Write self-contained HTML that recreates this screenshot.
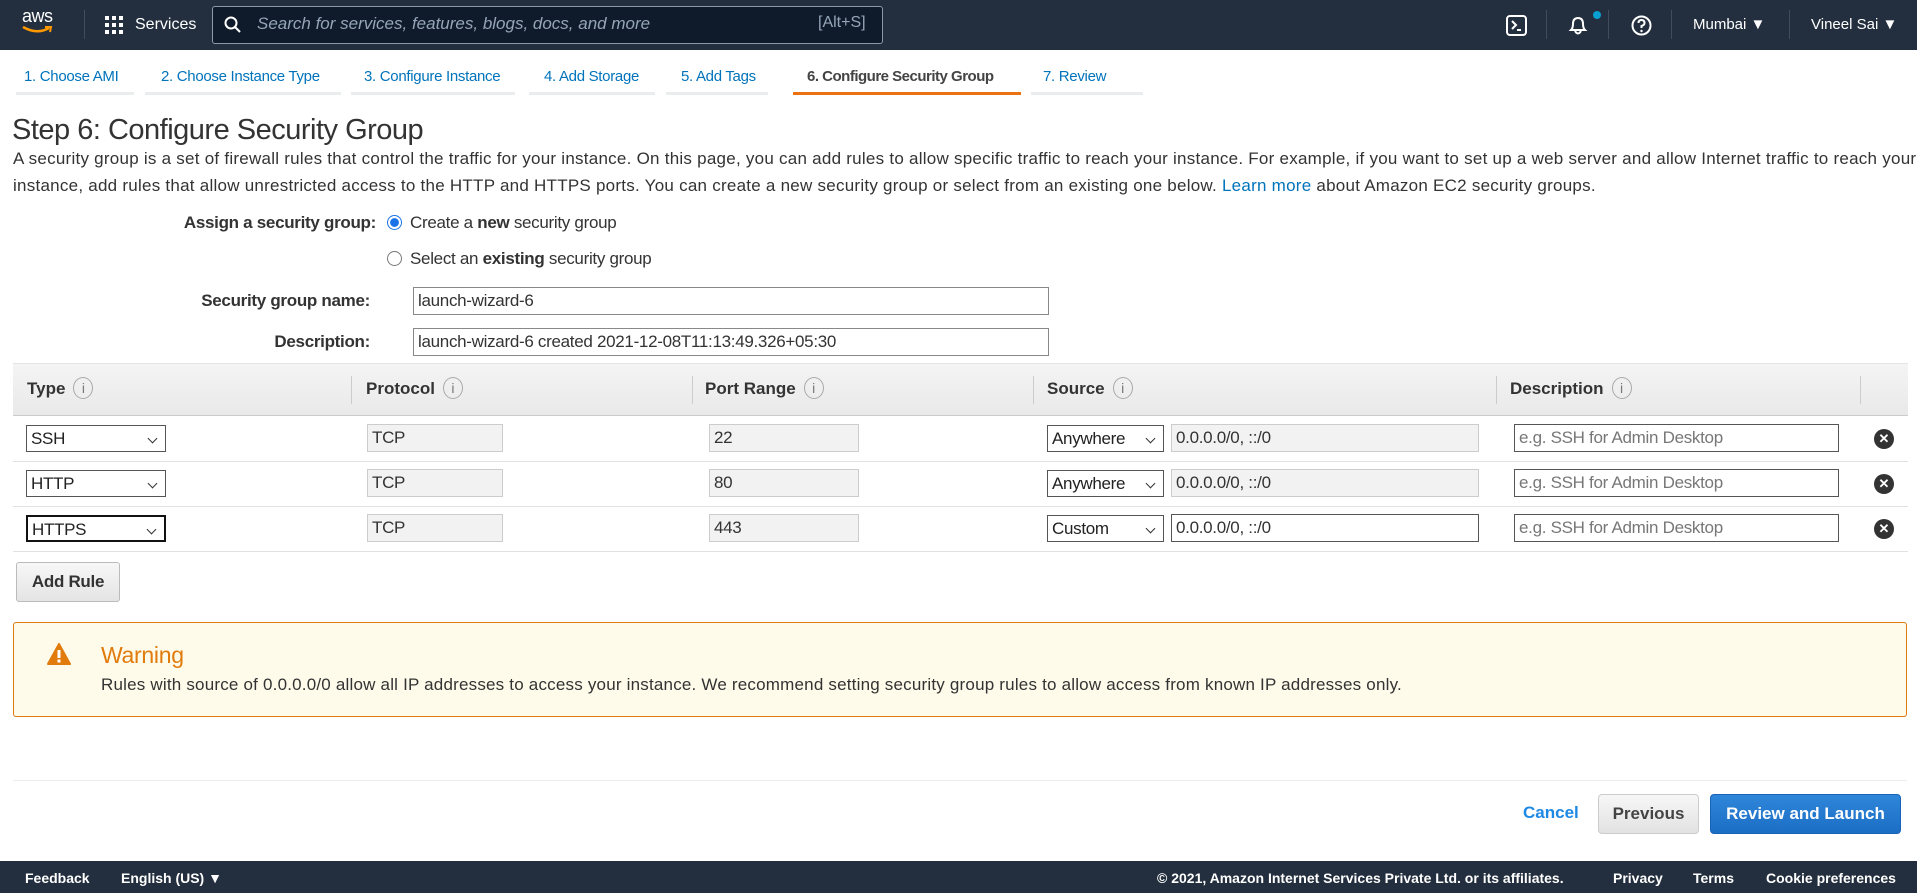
<!DOCTYPE html>
<html><head><meta charset="utf-8"><style>
*{box-sizing:border-box;margin:0;padding:0}
body{width:1917px;height:893px;position:relative;overflow:hidden;background:#fff;font-family:"Liberation Sans",Arial,sans-serif;color:#333}
.a{position:absolute;white-space:nowrap}
.nav{left:0;top:0;width:1917px;height:50px;background:#232f3e}
.navt{color:#fff;font-size:15px}
.tl{top:68px;font-size:15px;color:#0073bb;letter-spacing:-0.3px}
.ul{top:92px;height:3px;background:#eaeded}
.in{position:absolute;border:1px solid #aaa;background:#fff;font-size:17px;padding-left:4px;line-height:26px;height:28px;color:#333;white-space:nowrap;letter-spacing:-0.3px}
.ro{background:#f2f2f2;border-color:#ccc}
.ph{color:#777}
.sel{position:absolute;border:1px solid #555;background:#fff;font-size:17px;padding-left:4px;line-height:25px;height:27px;color:#222;letter-spacing:-0.3px}
.sel:after{content:"";position:absolute;right:9px;top:9px;width:6px;height:6px;border-right:1.5px solid #333;border-bottom:1.5px solid #333;transform:rotate(45deg)}
.th{font-weight:bold;font-size:17px;top:379px;color:#333}
.i{display:inline-block;width:20px;height:22px;border:1px solid #aaa;border-radius:50%;font-size:14px;text-align:center;line-height:20px;color:#777;font-weight:normal;vertical-align:middle;margin-left:8px;margin-top:-3px}
.x{position:absolute;width:20px;height:20px;border-radius:50%;background:#333;color:#fff;font-size:13px;text-align:center;line-height:20px;font-weight:bold}
.ft{color:#fff;font-size:14px;top:870px}
.rl{left:13px;width:1895px;height:1px;background:#e1e1e1}
.lbl{font-weight:bold;font-size:17px;text-align:right;letter-spacing:-0.3px}
.txt{font-size:17px;letter-spacing:-0.3px}
</style></head><body>
<div class="a nav"></div>
<div class="a navt" style="left:22px;top:6px;font-size:18px;letter-spacing:-0.5px">aws</div>
<svg class="a" style="left:21px;top:25px" width="32" height="10"><path d="M2 2 Q16 10 28 3" stroke="#f90" stroke-width="2.5" fill="none"/><path d="M24 2 L30 2 L29 7" stroke="#f90" stroke-width="2" fill="none"/></svg>
<div class="a" style="left:84px;top:10px;width:1px;height:29px;background:#414d5c"></div>
<svg class="a" style="left:105px;top:16px" width="18" height="18" fill="#fff"><rect x="0" y="0" width="4" height="4"/><rect x="7" y="0" width="4" height="4"/><rect x="14" y="0" width="4" height="4"/><rect x="0" y="7" width="4" height="4"/><rect x="7" y="7" width="4" height="4"/><rect x="14" y="7" width="4" height="4"/><rect x="0" y="14" width="4" height="4"/><rect x="7" y="14" width="4" height="4"/><rect x="14" y="14" width="4" height="4"/></svg>
<div class="a navt" style="left:135px;top:16px;font-size:16px">Services</div>
<div class="a" style="left:212px;top:6px;width:671px;height:38px;border:1px solid #8d99a8;border-radius:3px;background:#0f1b2a"></div>
<svg class="a" style="left:224px;top:16px" width="18" height="18"><circle cx="7" cy="7" r="5.5" stroke="#fff" stroke-width="2" fill="none"/><path d="M11 11 L16 16" stroke="#fff" stroke-width="2"/></svg>
<div class="a" style="left:257px;top:14px;font-size:17px;font-style:italic;color:#95a5b8">Search for services, features, blogs, docs, and more</div>
<div class="a" style="left:818px;top:14px;font-size:16px;color:#95a5b8">[Alt+S]</div>
<svg class="a" style="left:1506px;top:15px" width="21" height="21"><rect x="1" y="1" width="19" height="19" rx="3" stroke="#fff" stroke-width="2" fill="none"/><path d="M6 6 L10 10 L6 14" stroke="#fff" stroke-width="2" fill="none"/><path d="M11 15 H15" stroke="#fff" stroke-width="2"/></svg>
<div class="a" style="left:1546px;top:10px;width:1px;height:29px;background:#414d5c"></div>
<svg class="a" style="left:1567px;top:14px" width="22" height="22"><path d="M4 16 Q6 14 6 10 Q6 4 11 4 Q16 4 16 10 Q16 14 18 16 Z" stroke="#fff" stroke-width="2" fill="none"/><path d="M8 17 Q11 22 14 17" stroke="#fff" stroke-width="2" fill="none"/></svg>
<div class="a" style="left:1593px;top:11px;width:8px;height:8px;border-radius:50%;background:#0a9fd3"></div>
<div class="a" style="left:1608px;top:10px;width:1px;height:29px;background:#414d5c"></div>
<svg class="a" style="left:1631px;top:15px" width="21" height="21"><circle cx="10.5" cy="10.5" r="9" stroke="#fff" stroke-width="2" fill="none"/><path d="M7.5 8 Q7.5 5 10.5 5 Q13.5 5 13.5 8 Q13.5 10 10.5 11 V13" stroke="#fff" stroke-width="2" fill="none"/><circle cx="10.5" cy="16" r="1.2" fill="#fff"/></svg>
<div class="a" style="left:1671px;top:10px;width:1px;height:29px;background:#414d5c"></div>
<div class="a navt" style="left:1693px;top:16px">Mumbai ▼</div>
<div class="a" style="left:1789px;top:10px;width:1px;height:29px;background:#414d5c"></div>
<div class="a navt" style="left:1811px;top:16px">Vineel Sai ▼</div>

<div class="a tl" style="left:24px">1. Choose AMI</div>
<div class="a tl" style="left:161px">2. Choose Instance Type</div>
<div class="a tl" style="left:364px">3. Configure Instance</div>
<div class="a tl" style="left:544px">4. Add Storage</div>
<div class="a tl" style="left:681px">5. Add Tags</div>
<div class="a tl" style="left:807px;color:#444;font-weight:bold;letter-spacing:-0.5px">6. Configure Security Group</div>
<div class="a tl" style="left:1043px">7. Review</div>
<div class="a ul" style="left:16px;width:118px"></div>
<div class="a ul" style="left:145px;width:196px"></div>
<div class="a ul" style="left:351px;width:164px"></div>
<div class="a ul" style="left:529px;width:126px"></div>
<div class="a ul" style="left:666px;width:102px"></div>
<div class="a ul" style="left:793px;width:228px;background:#ec7211"></div>
<div class="a ul" style="left:1031px;width:112px"></div>

<div class="a" style="left:12px;top:114px;font-size:29px;color:#333;letter-spacing:-0.5px">Step 6: Configure Security Group</div>
<div class="a txt" style="left:13px;top:149px;letter-spacing:0.25px">A security group is a set of firewall rules that control the traffic for your instance. On this page, you can add rules to allow specific traffic to reach your instance. For example, if you want to set up a web server and allow Internet traffic to reach your</div>
<div class="a txt" style="left:13px;top:176px;letter-spacing:0.25px">instance, add rules that allow unrestricted access to the HTTP and HTTPS ports. You can create a new security group or select from an existing one below. <span style="color:#0073bb">Learn more</span> about Amazon EC2 security groups.</div>

<div class="a lbl" style="left:100px;width:276px;top:213px">Assign a security group:</div>
<div class="a" style="left:387px;top:215px;width:15px;height:15px;border-radius:50%;border:1px solid #1a73e8;background:radial-gradient(#1a73e8 45%,#fff 50%)"></div>
<div class="a txt" style="left:410px;top:213px">Create a <b>new</b> security group</div>
<div class="a" style="left:387px;top:251px;width:15px;height:15px;border-radius:50%;border:1px solid #777"></div>
<div class="a txt" style="left:410px;top:249px">Select an <b>existing</b> security group</div>

<div class="a lbl" style="left:100px;width:270px;top:291px">Security group name:</div>
<div class="in" style="left:413px;top:287px;width:636px;border-color:#888">launch-wizard-6</div>
<div class="a lbl" style="left:100px;width:270px;top:332px">Description:</div>
<div class="in" style="left:413px;top:328px;width:636px;border-color:#888">launch-wizard-6 created 2021-12-08T11:13:49.326+05:30</div>

<div class="a" style="left:13px;top:363px;width:1895px;height:53px;background:linear-gradient(#f4f4f4,#e9e9e9);border-top:1px solid #e4e4e4;border-bottom:1px solid #ccc"></div>
<div class="a" style="left:351px;top:376px;width:1px;height:28px;background:#ccc"></div>
<div class="a" style="left:692px;top:376px;width:1px;height:28px;background:#ccc"></div>
<div class="a" style="left:1033px;top:376px;width:1px;height:28px;background:#ccc"></div>
<div class="a" style="left:1496px;top:376px;width:1px;height:28px;background:#ccc"></div>
<div class="a" style="left:1860px;top:376px;width:1px;height:28px;background:#ccc"></div>
<div class="a th" style="left:27px">Type<span class="i">i</span></div>
<div class="a th" style="left:366px">Protocol<span class="i">i</span></div>
<div class="a th" style="left:705px">Port Range<span class="i">i</span></div>
<div class="a th" style="left:1047px">Source<span class="i">i</span></div>
<div class="a th" style="left:1510px">Description<span class="i">i</span></div>

<div class="a rl" style="top:461px"></div>
<div class="a rl" style="top:506px"></div>
<div class="a rl" style="top:551px"></div>

<div class="sel" style="left:26px;top:425px;width:140px">SSH</div>
<div class="in ro" style="left:367px;top:424px;width:136px">TCP</div>
<div class="in ro" style="left:709px;top:424px;width:150px">22</div>
<div class="sel" style="left:1047px;top:425px;width:117px">Anywhere</div>
<div class="in ro" style="left:1171px;top:424px;width:308px">0.0.0.0/0, ::/0</div>
<div class="in ph" style="left:1514px;top:424px;width:325px;border-color:#555">e.g. SSH for Admin Desktop</div>
<div class="x" style="left:1874px;top:429px">✕</div>

<div class="sel" style="left:26px;top:470px;width:140px">HTTP</div>
<div class="in ro" style="left:367px;top:469px;width:136px">TCP</div>
<div class="in ro" style="left:709px;top:469px;width:150px">80</div>
<div class="sel" style="left:1047px;top:470px;width:117px">Anywhere</div>
<div class="in ro" style="left:1171px;top:469px;width:308px">0.0.0.0/0, ::/0</div>
<div class="in ph" style="left:1514px;top:469px;width:325px;border-color:#555">e.g. SSH for Admin Desktop</div>
<div class="x" style="left:1874px;top:474px">✕</div>

<div class="sel" style="left:26px;top:515px;width:140px;border:2px solid #111">HTTPS</div>
<div class="in ro" style="left:367px;top:514px;width:136px">TCP</div>
<div class="in ro" style="left:709px;top:514px;width:150px">443</div>
<div class="sel" style="left:1047px;top:515px;width:117px">Custom</div>
<div class="in" style="left:1171px;top:514px;width:308px;border-color:#555">0.0.0.0/0, ::/0</div>
<div class="in ph" style="left:1514px;top:514px;width:325px;border-color:#555">e.g. SSH for Admin Desktop</div>
<div class="x" style="left:1874px;top:519px">✕</div>

<div class="a" style="left:16px;top:562px;width:104px;height:40px;border:1px solid #bbb;border-radius:3px;background:linear-gradient(#f7f7f7,#e4e4e4);font-weight:bold;font-size:17px;text-align:center;line-height:38px;letter-spacing:-0.3px">Add Rule</div>

<div class="a" style="left:13px;top:622px;width:1894px;height:95px;border:1px solid #e07b0c;border-radius:3px;background:#fefbea"></div>
<svg class="a" style="left:47px;top:643px" width="24" height="22"><path d="M12 1 L23 21 H1 Z" fill="#e07b0c" stroke="#e07b0c" stroke-linejoin="round" stroke-width="2"/><rect x="10.5" y="7" width="3" height="8" fill="#fff"/><rect x="10.5" y="16.5" width="3" height="3" fill="#fff"/></svg>
<div class="a" style="left:101px;top:642px;font-size:23px;color:#e07b0c;letter-spacing:-0.3px">Warning</div>
<div class="a txt" style="left:101px;top:675px;letter-spacing:0.2px">Rules with source of 0.0.0.0/0 allow all IP addresses to access your instance. We recommend setting security group rules to allow access from known IP addresses only.</div>

<div class="a" style="left:13px;top:780px;width:1894px;height:1px;background:#eaeded"></div>
<div class="a" style="left:1523px;top:803px;font-size:17px;font-weight:bold;color:#1e88e5">Cancel</div>
<div class="a" style="left:1598px;top:794px;width:101px;height:40px;border:1px solid #ccc;border-radius:4px;background:linear-gradient(#f7f7f7,#e2e2e2);font-weight:bold;font-size:17px;text-align:center;line-height:38px;color:#444">Previous</div>
<div class="a" style="left:1710px;top:794px;width:191px;height:40px;border:1px solid #1a62b8;border-radius:4px;background:linear-gradient(#2f86d9,#1b6ec4);font-weight:bold;font-size:17px;text-align:center;line-height:38px;color:#fff">Review and Launch</div>

<div class="a" style="left:0;top:861px;width:1917px;height:32px;background:#232f3e"></div>
<div class="a ft" style="left:25px;font-weight:bold">Feedback</div>
<div class="a ft" style="left:121px;font-weight:bold">English (US) ▼</div>
<div class="a ft" style="left:1157px;font-weight:bold">© 2021, Amazon Internet Services Private Ltd. or its affiliates.</div>
<div class="a ft" style="left:1613px;font-weight:bold">Privacy</div>
<div class="a ft" style="left:1693px;font-weight:bold">Terms</div>
<div class="a ft" style="left:1766px;font-weight:bold">Cookie preferences</div>
</body></html>
